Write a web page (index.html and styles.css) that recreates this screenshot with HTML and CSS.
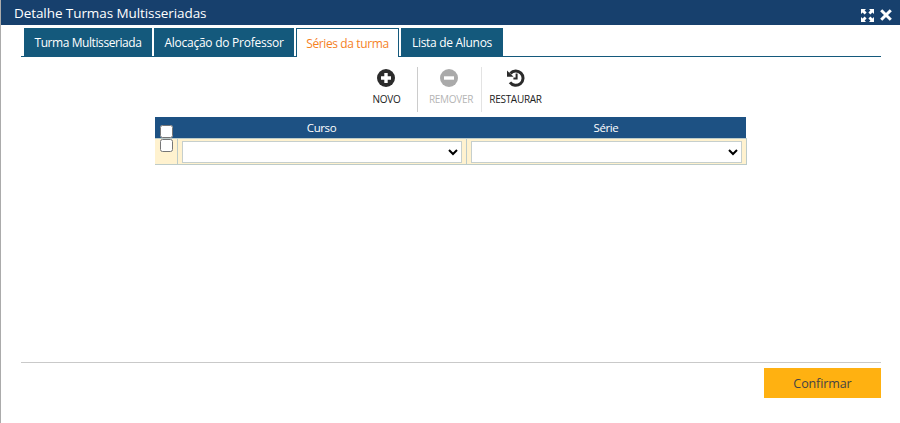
FILE: index.html
```html
<!DOCTYPE html>
<html lang="pt">
<head>
<meta charset="utf-8">
<title>Detalhe Turmas Multisseriadas</title>
<link rel="stylesheet" href="styles.css">
</head>
<body>
<div class="window">
  <header class="titlebar">
    <span class="title">Detalhe Turmas Multisseriadas</span>
    <div class="win-actions">
      <svg class="win-icon" width="13" height="13" viewBox="0 0 13 13"><path fill="#fff" d="M0 0h5L3.6 1.6 5.6 3.6 3.6 5.6 1.6 3.6 0 5zM13 0v5L11.4 3.6 9.4 5.6 7.4 3.6 9.4 1.6 8 0zM0 13V8l1.6 1.4 2-2 2 2-2 2L5 13zM13 13H8l1.4-1.6-2-2 2-2 2 2L13 8z"/></svg>
      <svg class="win-icon" width="12" height="12" viewBox="0 0 12 12"><path stroke="#fff" stroke-width="3" d="M1.2 1.2l9.6 9.6M10.8 1.2l-9.6 9.6"/></svg>
    </div>
  </header>
  <div class="content">
    <nav class="tabs">
      <a class="tab">Turma Multisseriada</a>
      <a class="tab">Alocação do Professor</a>
      <a class="tab active">Séries da turma</a>
      <a class="tab">Lista de Alunos</a>
    </nav>
    <div class="toolbar">
      <button class="tool tool-novo">
        <svg width="18" height="18" viewBox="0 0 18 18"><circle cx="9" cy="9" r="9" fill="#2b2b2b"/><path stroke="#fff" stroke-width="3.4" d="M9 4v10M4 9h10"/></svg>
        <span>NOVO</span>
      </button>
      <button class="tool tool-remover">
        <svg width="18" height="18" viewBox="0 0 18 18"><circle cx="9" cy="9" r="9" fill="#aaa"/><path stroke="#fff" stroke-width="3.4" d="M4 9h10"/></svg>
        <span>REMOVER</span>
      </button>
      <button class="tool tool-restaurar">
        <svg width="18" height="18" viewBox="0 0 18 18"><path fill="none" stroke="#2b2b2b" stroke-width="3" d="M3.4 4.4A7.2 7.2 0 1 1 3 13.4"/><path fill="#2b2b2b" d="M0 1.6l6.6 6.2H0z"/><path fill="none" stroke="#2b2b2b" stroke-width="2" d="M9.6 4.6v5H6.4"/></svg>
        <span>RESTAURAR</span>
      </button>
    </div>
    <table class="grid">
      <colgroup>
        <col class="col-check">
        <col class="col-curso">
        <col class="col-serie">
      </colgroup>
      <thead>
        <tr>
          <th><input type="checkbox" class="check check-head"></th>
          <th>Curso</th>
          <th>Série</th>
        </tr>
      </thead>
      <tbody>
        <tr>
          <td class="cell-check"><input type="checkbox" class="check check-row"></td>
          <td><select class="field"><option></option></select></td>
          <td><select class="field"><option></option></select></td>
        </tr>
      </tbody>
    </table>
    <footer class="footer">
      <button class="confirm">Confirmar</button>
    </footer>
  </div>
</div>
</body>
</html>
```
FILE: styles.css
```css
* { box-sizing: border-box; }
html, body { margin: 0; height: 100%; background: #fff; }
body { font-family: "Open Sans", "Noto Sans", "Liberation Sans", sans-serif; overflow: hidden; }
.window { height: 423px; border-left: 1px solid #ababab; display: flex; flex-direction: column; }
.titlebar {
  height: 25px; flex: none; background: #17406d; color: #fff;
  display: flex; align-items: center; justify-content: space-between;
  padding: 0 8px 0 13px;
}
.title { font-size: 13.5px; letter-spacing: -0.08px; }
.win-actions { display: flex; align-items: center; gap: 6px; padding-top: 5px; }
.win-icon { display: block; }
.content { flex: 1; padding: 3px 19px 0 20px; display: flex; flex-direction: column; }
.tabs { height: 29px; flex: none; display: flex; gap: 2px; padding-left: 3px; border-bottom: 1px solid #14597c; }
.tab {
  height: 28px; background: #14597c; color: #fff; font-size: 12px; letter-spacing: -0.42px;
  display: flex; align-items: center; justify-content: center;
}
.tab:nth-child(1) { width: 128px; }
.tab:nth-child(2) { width: 140px; letter-spacing: -0.25px; }
.tab:nth-child(3) { width: 103px; letter-spacing: -0.38px; }
.tab:nth-child(4) { width: 102px; letter-spacing: -0.3px; }
.tab.active {
  height: 29px; background: #fff; color: #f5821f;
  border: 1px solid #14597c; border-bottom: 0;
}
.toolbar { height: 60px; flex: none; display: flex; justify-content: center; padding: 10px 0 0 4px; }
.tool {
  height: 45px; border: 0; background: none; padding: 2px 0 0; font: inherit; font-size: 10px; letter-spacing: -0.3px;
  color: #222; display: flex; flex-direction: column; align-items: center; gap: 5px;
}
.tool span { line-height: 14px; }
.tool-novo { width: 61px; border-right: 1px solid #ccc; }
.tool-novo svg { margin-right: 2px; }
.tool-remover { width: 64px; border-right: 1px solid #e3e3e3; color: #b5b5b5; }
.tool-remover span { padding-left: 4px; }
.tool-restaurar { width: 68px; }
.grid { width: 591px; margin-left: 134px; border-collapse: collapse; table-layout: fixed; }
.col-check { width: 22px; }
.col-curso { width: 289px; }
.col-serie { width: 280px; }
.grid th { height: 21px; background: #1d5183; color: #fff; font-weight: 400; font-size: 11.5px; letter-spacing: -0.4px; padding: 0; vertical-align: middle; }
.grid td { height: 26px; background: #fff2cf; border: 1px solid #bdcbc9; padding: 2px 4px 0; vertical-align: top; }
.grid td.cell-check { padding: 0; border-left: 0; }
.check { width: 13px; height: 13px; margin: 0; display: block; }
.check-head { margin: 8px 0 0 5px; }
.check-row { margin: 0 0 0 5px; }
.field { width: 100%; height: 22px; display: block; background: #fff; border: 1px solid #c6cfcd; border-radius: 0; font-size: 12px; }
.footer { margin-top: auto; height: 61px; flex: none; border-top: 1px solid #c9c9c9; display: flex; justify-content: flex-end; padding-top: 5px; }
.confirm { width: 117px; height: 30px; border: 0; background: #ffb111; color: #444; font: inherit; font-size: 12.5px; letter-spacing: -0.1px; padding: 0; }
```
